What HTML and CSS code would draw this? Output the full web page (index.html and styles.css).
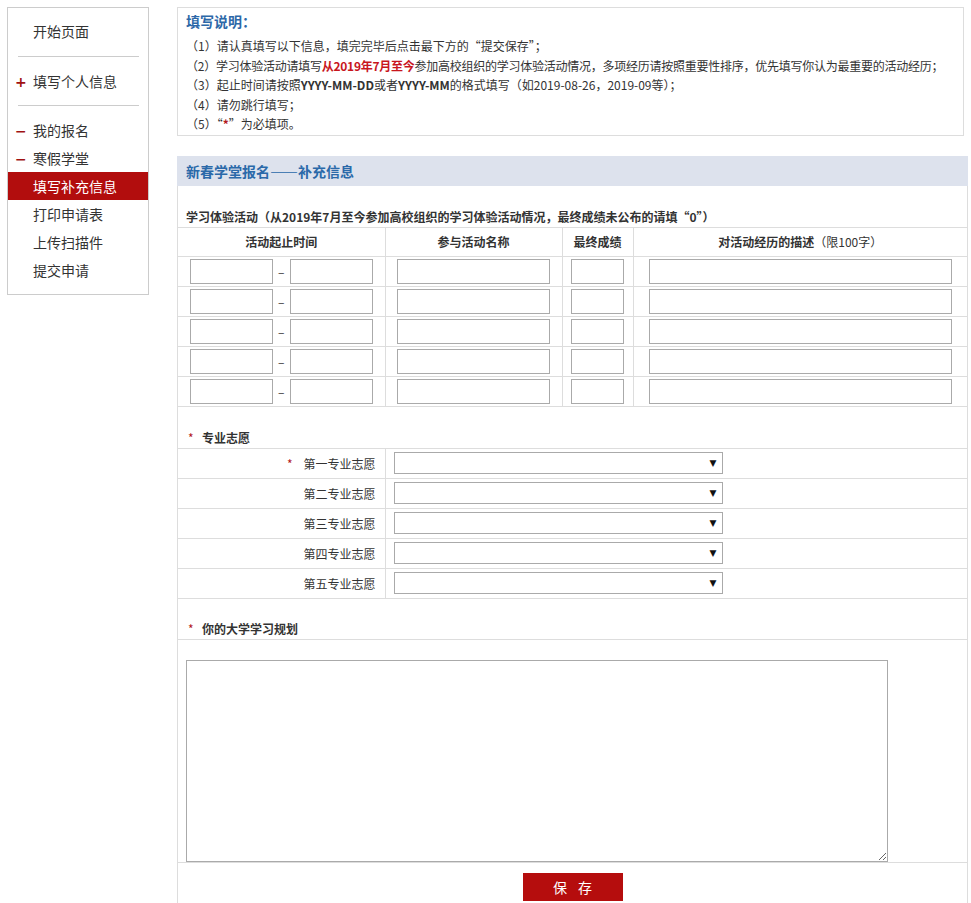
FILE: index.html
```html
<!DOCTYPE html>
<html lang="zh-CN">
<head>
    <meta charset="UTF-8">
    <meta name="viewport" content="width=device-width, initial-scale=1.0">
    <title>新春学堂报名——补充信息</title>
    <link rel="stylesheet" href="styles.css">
</head>
<body>
<div class="page">
    <div class="sidebar">
        <ul class="nav-group first">
            <li>开始页面</li>
        </ul>
        <div class="nav-line"></div>
        <ul class="nav-group">
            <li class="has-mark"><span class="mark">+</span>填写个人信息</li>
        </ul>
        <div class="nav-line"></div>
        <ul class="nav-group">
            <li class="has-mark"><span class="mark">−</span>我的报名</li>
            <li class="has-mark"><span class="mark">−</span>寒假学堂</li>
            <li class="active">填写补充信息</li>
            <li>打印申请表</li>
            <li>上传扫描件</li>
            <li>提交申请</li>
        </ul>
    </div>

    <div class="main">
        <div class="notice">
            <div class="notice-title">填写说明：</div>
            <p>（1）请认真填写以下信息，填完完毕后点击最下方的“提交保存”；</p>
            <p class="tight">（2）学习体验活动请填写<b class="hl">从2019年7月至今</b>参加高校组织的学习体验活动情况，多项经历请按照重要性排序，优先填写你认为最重要的活动经历；</p>
            <p>（3）起止时间请按照<b>YYYY-MM-DD</b>或者<b>YYYY-MM</b>的格式填写（如2019-08-26，2019-09等）；</p>
            <p>（4）请勿跳行填写；</p>
            <p>（5）“<span class="req-inline">*</span>”为必填项。</p>
        </div>

        <div class="section-head">新春学堂报名——补充信息</div>

        <div class="panel">
            <div class="caption">学习体验活动（从2019年7月至今参加高校组织的学习体验活动情况，最终成绩未公布的请填“0”）</div>
            <table class="grid activity">
                <colgroup>
                    <col style="width: 207px">
                    <col style="width: 177px">
                    <col style="width: 71px">
                    <col>
                </colgroup>
                <tr>
                    <th>活动起止时间</th>
                    <th>参与活动名称</th>
                    <th>最终成绩</th>
                    <th>对活动经历的描述<span class="thin">（限100字）</span></th>
                </tr>
                <tr>
                    <td><div class="range"><input type="text" class="in-date"><span class="dash">–</span><input type="text" class="in-date"></div></td>
                    <td><input type="text" class="in-name"></td>
                    <td><input type="text" class="in-score"></td>
                    <td><input type="text" class="in-desc"></td>
                </tr>
                <tr>
                    <td><div class="range"><input type="text" class="in-date"><span class="dash">–</span><input type="text" class="in-date"></div></td>
                    <td><input type="text" class="in-name"></td>
                    <td><input type="text" class="in-score"></td>
                    <td><input type="text" class="in-desc"></td>
                </tr>
                <tr>
                    <td><div class="range"><input type="text" class="in-date"><span class="dash">–</span><input type="text" class="in-date"></div></td>
                    <td><input type="text" class="in-name"></td>
                    <td><input type="text" class="in-score"></td>
                    <td><input type="text" class="in-desc"></td>
                </tr>
                <tr>
                    <td><div class="range"><input type="text" class="in-date"><span class="dash">–</span><input type="text" class="in-date"></div></td>
                    <td><input type="text" class="in-name"></td>
                    <td><input type="text" class="in-score"></td>
                    <td><input type="text" class="in-desc"></td>
                </tr>
                <tr>
                    <td><div class="range"><input type="text" class="in-date"><span class="dash">–</span><input type="text" class="in-date"></div></td>
                    <td><input type="text" class="in-name"></td>
                    <td><input type="text" class="in-score"></td>
                    <td><input type="text" class="in-desc"></td>
                </tr>
            </table>

            <div class="caption"><span class="req">*</span>专业志愿</div>
            <table class="grid majors">
                <colgroup>
                    <col style="width: 207px">
                    <col>
                </colgroup>
                <tr>
                    <td class="label"><span class="req-label">*</span>第一专业志愿</td>
                    <td class="field"><span class="select"><select></select></span></td>
                </tr>
                <tr>
                    <td class="label">第二专业志愿</td>
                    <td class="field"><span class="select"><select></select></span></td>
                </tr>
                <tr>
                    <td class="label">第三专业志愿</td>
                    <td class="field"><span class="select"><select></select></span></td>
                </tr>
                <tr>
                    <td class="label">第四专业志愿</td>
                    <td class="field"><span class="select"><select></select></span></td>
                </tr>
                <tr>
                    <td class="label">第五专业志愿</td>
                    <td class="field"><span class="select"><select></select></span></td>
                </tr>
            </table>

            <div class="caption plan-caption"><span class="req">*</span>你的大学学习规划</div>
            <div class="plan">
                <textarea></textarea>
            </div>

            <div class="actions">
                <button type="button" class="save">保存</button>
            </div>
        </div>
    </div>
</div>
</body>
</html>
```

FILE: styles.css
```css
body {
    margin: 0;
    padding: 7px 0 0 7px;
    font-family: "Noto Sans CJK SC", "Liberation Sans", sans-serif;
    font-size: 12px;
    color: #333;
    background-color: #fff;
}
.page {
    display: flex;
    align-items: flex-start;
}

/* 左侧菜单 */
.sidebar {
    width: 142px;
    flex-shrink: 0;
    box-sizing: border-box;
    border: 1px solid #ccc;
    font-size: 14px;
}
.nav-group {
    list-style: none;
    margin: 0;
    padding: 10px 0;
}
.nav-group.first {
    padding: 9px 0 11px;
}
.nav-group li {
    height: 28px;
    line-height: 28px;
    padding-left: 25px;
}
.nav-group li.has-mark {
    padding-left: 7px;
}
.mark {
    display: inline-block;
    width: 18px;
    font-family: "DejaVu Sans", sans-serif;
    font-weight: bold;
    font-size: 14px;
    color: #a01212;
}
.nav-group li.active {
    background-color: #b20d0d;
    color: #fff;
}
.nav-line {
    height: 1px;
    margin: 0 9px 0 10px;
    background-color: #ccc;
}

/* 右侧主体 */
.main {
    margin-left: 28px;
    width: 791px;
}
.notice {
    border: 1px solid #ddd;
    margin-right: 4px;
    padding: 3px 8px 1px;
}
.notice-title {
    font-size: 14px;
    font-weight: bold;
    line-height: 20px;
    color: #2d68a8;
    margin-bottom: 5px;
}
.notice p {
    margin: 0;
    line-height: 19.5px;
    white-space: nowrap;
}
.notice p.tight {
    letter-spacing: -0.25px;
}
.hl {
    color: #c8161d;
}
.req-inline {
    color: #b3181e;
    font-weight: bold;
}
.section-head {
    margin-top: 20px;
    height: 30px;
    line-height: 30px;
    padding-left: 9px;
    background-color: #dde2ed;
    color: #2a69a9;
    font-size: 14px;
    font-weight: bold;
}
.panel {
    border-left: 1px solid #ddd;
    border-right: 1px solid #ddd;
}
.caption {
    padding: 23px 8px 2px;
    line-height: 16px;
    font-weight: bold;
}
.req {
    display: inline-block;
    width: 16px;
    padding-left: 2px;
    box-sizing: border-box;
    color: #b3181e;
    font-weight: normal;
}
.req-label {
    color: #b3181e;
    margin-right: 11px;
}

/* 表格 */
.grid {
    width: 100%;
    border-collapse: collapse;
    table-layout: fixed;
}
.grid th,
.grid td {
    border: 1px solid #ddd;
    padding: 0;
    text-align: center;
    vertical-align: middle;
}
.grid tr th:first-child,
.grid tr td:first-child {
    border-left: none;
}
.grid tr th:last-child,
.grid tr td:last-child {
    border-right: none;
}
.grid th {
    height: 28px;
    font-weight: bold;
}
.grid td {
    height: 29px;
}
.thin {
    font-weight: normal;
}
.range {
    display: flex;
    justify-content: center;
    align-items: center;
}
.dash {
    display: inline-block;
    width: 17px;
    text-align: center;
}
input[type="text"] {
    height: 25px;
    box-sizing: border-box;
    border: 1px solid #aaa;
    padding: 0 3px;
    margin: 0;
    vertical-align: middle;
    font-family: inherit;
    font-size: 12px;
}
.in-date {
    width: 83px;
}
.in-name {
    width: 153px;
}
.in-score {
    width: 53px;
}
.in-desc {
    width: 303px;
}
.majors td.label {
    text-align: right;
    padding-right: 9px;
}
.majors td.field {
    text-align: left;
    padding-left: 8px;
}
.select {
    position: relative;
    display: inline-block;
    width: 329px;
    height: 22px;
    vertical-align: middle;
}
.select select {
    appearance: none;
    -webkit-appearance: none;
    width: 100%;
    height: 22px;
    margin: 0;
    border: 1px solid #aaa;
    background-color: #fff;
    display: block;
}
.select::after {
    content: "▼";
    position: absolute;
    right: 6px;
    top: 5px;
    font-family: "DejaVu Sans", sans-serif;
    font-size: 9px;
    line-height: 12px;
    color: #111;
}
.plan-caption {
    padding-top: 22px;
    border-bottom: 1px solid #ddd;
}
.plan {
    padding: 20px 8px 0;
    border-bottom: 1px solid #ddd;
}
.plan textarea {
    display: block;
    width: 702px;
    height: 202px;
    box-sizing: border-box;
    border: 1px solid #aaa;
    margin: 0;
}
.actions {
    padding: 10px 0 6px;
    text-align: center;
}
.save {
    width: 100px;
    height: 28px;
    border: none;
    background-color: #b50d0d;
    color: #fff;
    font-family: inherit;
    font-size: 14px;
    letter-spacing: 11px;
    text-indent: 11px;
    cursor: pointer;
}
```
